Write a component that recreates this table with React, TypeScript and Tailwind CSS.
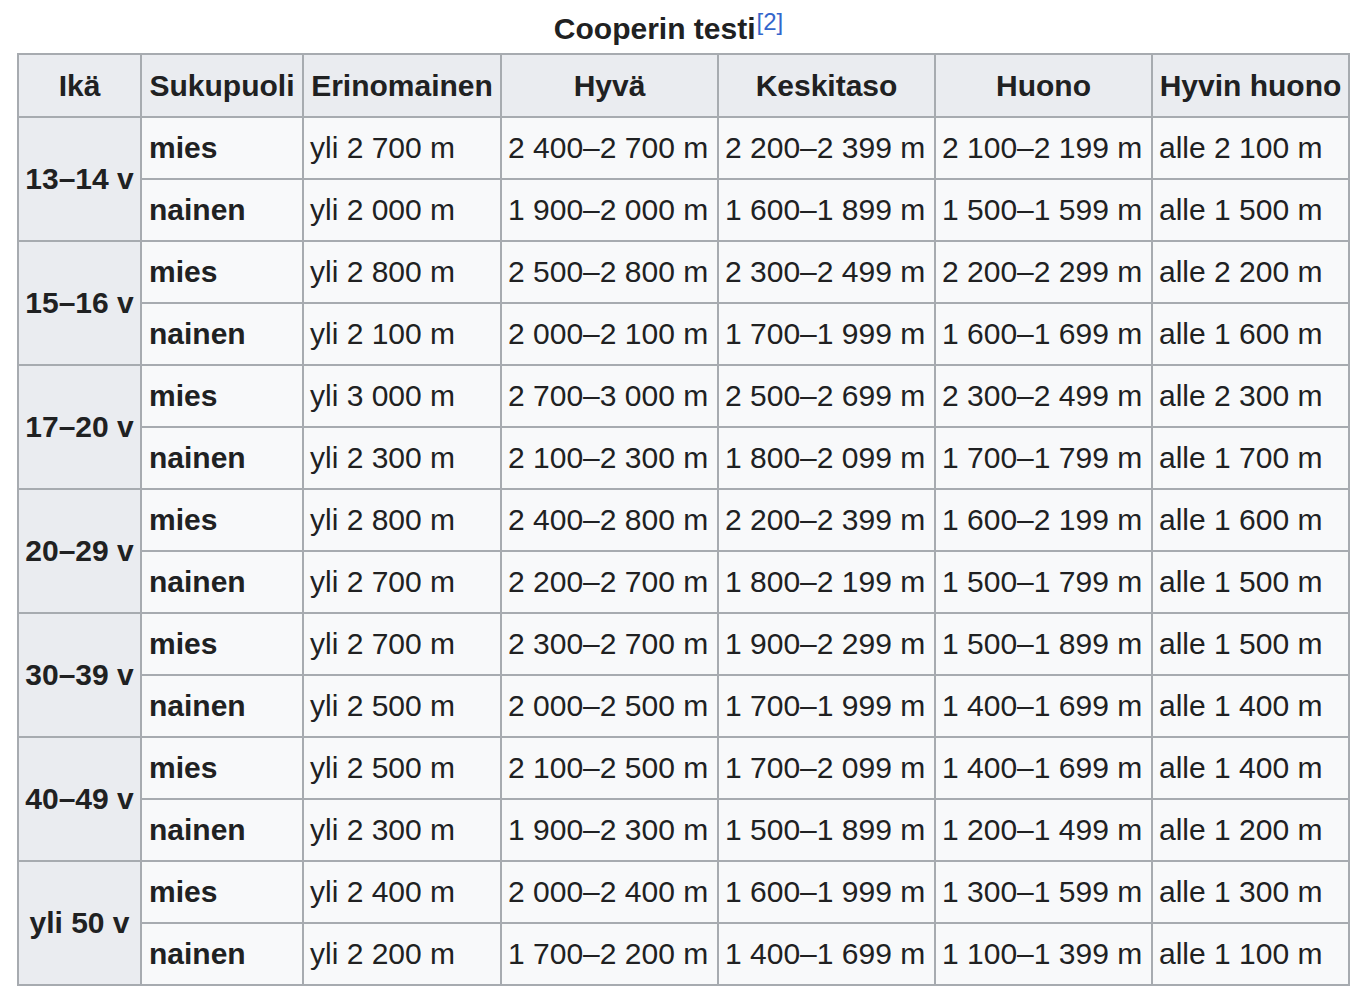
import React from 'react';

const groups = [
  { age: '13–14 v', rows: [
    ['mies', 'yli 2 700 m', '2 400–2 700 m', '2 200–2 399 m', '2 100–2 199 m', 'alle 2 100 m'],
    ['nainen', 'yli 2 000 m', '1 900–2 000 m', '1 600–1 899 m', '1 500–1 599 m', 'alle 1 500 m'],
  ] },
  { age: '15–16 v', rows: [
    ['mies', 'yli 2 800 m', '2 500–2 800 m', '2 300–2 499 m', '2 200–2 299 m', 'alle 2 200 m'],
    ['nainen', 'yli 2 100 m', '2 000–2 100 m', '1 700–1 999 m', '1 600–1 699 m', 'alle 1 600 m'],
  ] },
  { age: '17–20 v', rows: [
    ['mies', 'yli 3 000 m', '2 700–3 000 m', '2 500–2 699 m', '2 300–2 499 m', 'alle 2 300 m'],
    ['nainen', 'yli 2 300 m', '2 100–2 300 m', '1 800–2 099 m', '1 700–1 799 m', 'alle 1 700 m'],
  ] },
  { age: '20–29 v', rows: [
    ['mies', 'yli 2 800 m', '2 400–2 800 m', '2 200–2 399 m', '1 600–2 199 m', 'alle 1 600 m'],
    ['nainen', 'yli 2 700 m', '2 200–2 700 m', '1 800–2 199 m', '1 500–1 799 m', 'alle 1 500 m'],
  ] },
  { age: '30–39 v', rows: [
    ['mies', 'yli 2 700 m', '2 300–2 700 m', '1 900–2 299 m', '1 500–1 899 m', 'alle 1 500 m'],
    ['nainen', 'yli 2 500 m', '2 000–2 500 m', '1 700–1 999 m', '1 400–1 699 m', 'alle 1 400 m'],
  ] },
  { age: '40–49 v', rows: [
    ['mies', 'yli 2 500 m', '2 100–2 500 m', '1 700–2 099 m', '1 400–1 699 m', 'alle 1 400 m'],
    ['nainen', 'yli 2 300 m', '1 900–2 300 m', '1 500–1 899 m', '1 200–1 499 m', 'alle 1 200 m'],
  ] },
  { age: 'yli 50 v', rows: [
    ['mies', 'yli 2 400 m', '2 000–2 400 m', '1 600–1 999 m', '1 300–1 599 m', 'alle 1 300 m'],
    ['nainen', 'yli 2 200 m', '1 700–2 200 m', '1 400–1 699 m', '1 100–1 399 m', 'alle 1 100 m'],
  ] },
];

const headers = ['Ikä', 'Sukupuoli', 'Erinomainen', 'Hyvä', 'Keskitaso', 'Huono', 'Hyvin huono'];
const widths = [123, 162, 198, 217, 217, 217, 197];

export default function App() {
  return (
    <div className="min-h-screen bg-white pl-[17px] pt-[11px] text-[#202122]" style={{ fontFamily: '"Liberation Sans", Arial, sans-serif' }}>
      <table className="table-fixed border-collapse border-2 border-[#a7abb0] bg-[#f8f9fa] text-[30px] leading-[36px]" style={{ width: 1331 }}>
        <caption className="pb-[6px] pr-[30px] text-center font-bold">
          Cooperin testi<sup className="relative -top-[9px] ml-[1px] text-[24px] font-normal text-[#3366cc]">[2]</sup>
        </caption>
        <colgroup>
          {widths.map((w, i) => <col key={i} style={{ width: w }} />)}
        </colgroup>
        <thead>
          <tr className="h-[63px] bg-[#eaecf0]">
            {headers.map((h) => (
              <th key={h} className="border-2 border-[#a7abb0] px-[6px] text-center font-bold whitespace-nowrap">{h}</th>
            ))}
          </tr>
        </thead>
        <tbody>
          {groups.map((g) =>
            g.rows.map((r, i) => (
              <tr key={g.age + i} className="h-[62px]">
                {i === 0 && (
                  <th rowSpan={2} className="border-2 border-[#a7abb0] bg-[#eaecf0] px-[6px] text-center font-bold whitespace-nowrap">{g.age}</th>
                )}
                <td className="border-2 border-[#a7abb0] px-[7px] font-bold whitespace-nowrap">{r[0]}</td>
                {r.slice(1).map((c, j) => (
                  <td key={j} className="border-2 border-[#a7abb0] px-[6px] whitespace-nowrap">{c}</td>
                ))}
              </tr>
            ))
          )}
        </tbody>
      </table>
    </div>
  );
}
